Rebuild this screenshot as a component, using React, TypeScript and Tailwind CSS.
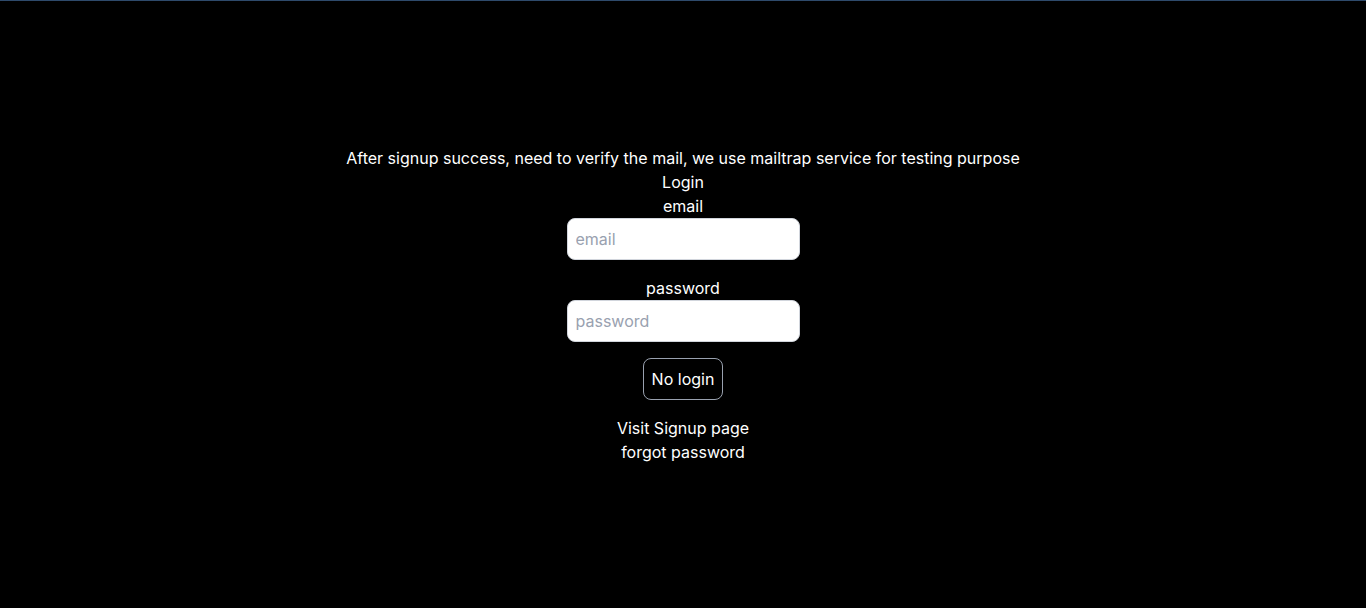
import React from 'react';

const Login: React.FC = () => {
  return (
    <div className="flex flex-col items-center text-white">
      <p>After signup success, need to verify the mail, we use mailtrap service for testing purpose</p>
      <h1>Login</h1>
      <label htmlFor="email">email</label>
      <input
        id="email"
        type="email"
        placeholder="email"
        className="w-[233px] p-2 rounded-lg border border-gray-300 bg-white text-black placeholder:text-gray-400 outline-none"
      />
      <label htmlFor="password" className="mt-4">
        password
      </label>
      <input
        id="password"
        type="password"
        placeholder="password"
        className="w-[233px] p-2 rounded-lg border border-gray-300 bg-white text-black placeholder:text-gray-400 outline-none"
      />
      <button className="mt-4 mb-4 p-2 rounded-lg border border-gray-400 text-white">No login</button>
      <a href="#">Visit Signup page</a>
      <a href="#">forgot password</a>
    </div>
  );
};

export default function App() {
  return (
    <main className="min-h-screen flex items-center justify-center bg-black border-t border-[#2e4a6b] font-['Inter',sans-serif] text-base">
      <Login />
    </main>
  );
}
